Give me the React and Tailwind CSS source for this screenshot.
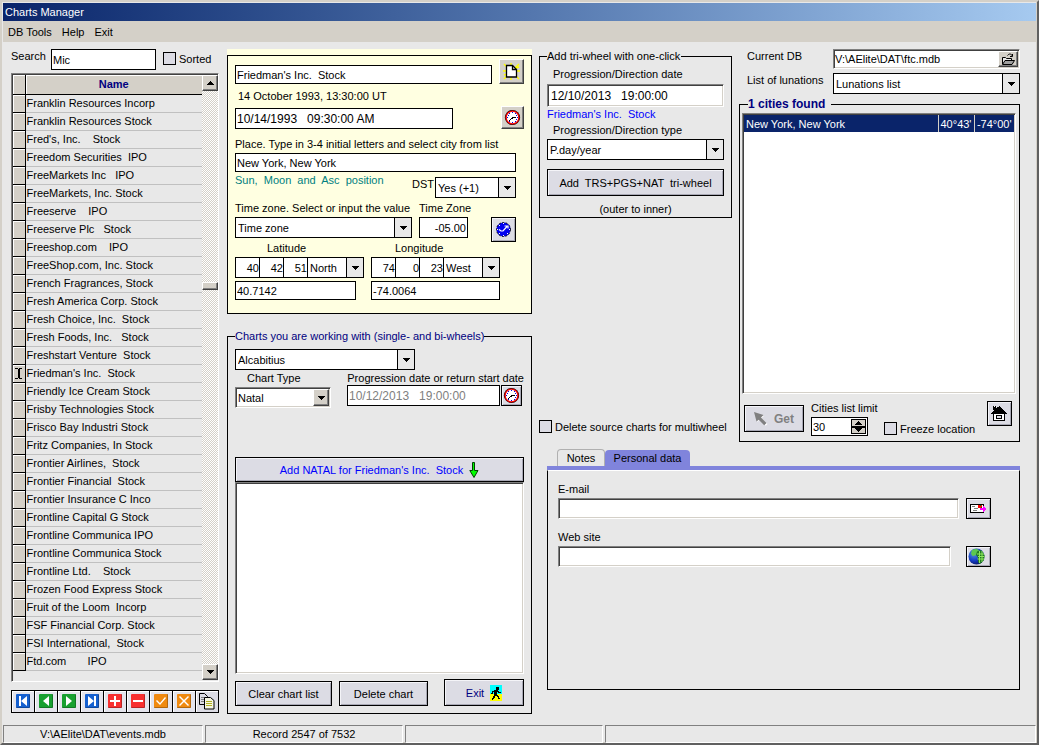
import { useState } from "react";
import clsx from "clsx";

const RECORDS = [
  "Franklin Resources Incorp",
  "Franklin Resources Stock",
  "Fred's, Inc.    Stock",
  "Freedom Securities  IPO",
  "FreeMarkets Inc   IPO",
  "FreeMarkets, Inc. Stock",
  "Freeserve    IPO",
  "Freeserve Plc   Stock",
  "Freeshop.com    IPO",
  "FreeShop.com, Inc. Stock",
  "French Fragrances, Stock",
  "Fresh America Corp. Stock",
  "Fresh Choice, Inc.  Stock",
  "Fresh Foods, Inc.   Stock",
  "Freshstart Venture  Stock",
  "Friedman's Inc.  Stock",
  "Friendly Ice Cream Stock",
  "Frisby Technologies Stock",
  "Frisco Bay Industri Stock",
  "Fritz Companies, In Stock",
  "Frontier Airlines,  Stock",
  "Frontier Financial  Stock",
  "Frontier Insurance C Inco",
  "Frontline Capital G Stock",
  "Frontline Communica IPO",
  "Frontline Communica Stock",
  "Frontline Ltd.    Stock",
  "Frozen Food Express Stock",
  "Fruit of the Loom  Incorp",
  "FSF Financial Corp. Stock",
  "FSI International,  Stock",
  "Ftd.com       IPO",
];

const RAISED =
  "bg-[#d4d0c8] border border-t-white border-l-white border-r-[#404040] border-b-[#404040] shadow-[inset_-1px_-1px_0_#808080]";
const FLAT_BTN =
  "flex items-center justify-center border border-black bg-[#dcdce4] shadow-[inset_1px_1px_0_#f4f4f8,inset_-1px_-1px_0_#a8a8b4]";
const SUNKEN =
  "bg-white border border-t-[#808080] border-l-[#808080] border-r-white border-b-white shadow-[inset_1px_1px_0_#404040,inset_-1px_-1px_0_#d4d0c8]";
const FIELD = "border border-black bg-white px-px outline-none";

const DownArrow = () => (
  <svg width="7" height="4" viewBox="0 0 7 4" shapeRendering="crispEdges" aria-hidden="true">
    <path d="M0 0h7v1H6v1H5v1H4v1H3V3H2V2H1V1H0z" fill="#000" />
  </svg>
);

const UpArrow = () => (
  <svg width="7" height="4" viewBox="0 0 7 4" shapeRendering="crispEdges" aria-hidden="true">
    <path d="M3 0h1v1h1v1h1v1h1v1H0V3h1V2h1V1h1z" fill="#000" />
  </svg>
);

const Combo = ({ label, id, options, className, sunken }) => (
  <div
    className={clsx(
      "relative h-[21px] shrink-0",
      sunken ? SUNKEN : "border border-black bg-white",
      className,
    )}
  >
    <select
      id={id}
      aria-label={label}
      className="block h-full w-full appearance-none bg-transparent pl-0.5 pr-4 outline-none"
    >
      {options.map((o) => (
        <option key={o}>{o}</option>
      ))}
    </select>
    <span
      className={clsx(
        "pointer-events-none absolute flex items-center justify-center",
        sunken
          ? "top-px right-px bottom-px w-4 " + RAISED
          : "inset-y-0 right-0 w-[17px] border-l border-black bg-[#e8e8e8]",
      )}
    >
      <DownArrow />
    </span>
  </div>
);

const CheckBox = ({ label, className }) => (
  <label className={clsx("flex items-center gap-[3px] whitespace-nowrap", className)}>
    <input
      type="checkbox"
      className="size-[13px] appearance-none border border-black bg-[#dcdce4] checked:bg-[#0a246a]"
    />
    {label}
  </label>
);

const ClockIcon = () => (
  <svg width="17" height="17" viewBox="0 0 17 17" aria-hidden="true">
    <circle cx="8.5" cy="8.5" r="7.600" fill="#000" />
    <circle cx="8.5" cy="8.5" r="7.100" fill="#f00000" />
    <circle cx="8.5" cy="8.5" r="5.700" fill="#fff" />
    <g fill="#0000e0" shapeRendering="crispEdges">
      <path d="M8 3h1v1H8zM8 13h1v1H8zM3 8h1v1H3zM13 8h1v1h-1zM5 4h1v1H5zM11 4h1v1h-1zM5 12h1v1H5zM11 12h1v1h-1zM4 6h1v1H4zM12 6h1v1h-1zM12 10h1v1h-1z" />
    </g>
    <path d="M5 11h1v-1h1V9h1V8h4v1H9v1H7v1H6v1H5z" fill="#000" shapeRendering="crispEdges" />
  </svg>
);

const NewPageIcon = () => (
  <svg width="17" height="17" viewBox="0 0 17 17" aria-hidden="true">
    <path
      d="M1 1l4 4M8 0v3M16 1l-4 4M0 8h4M13 8h4M1 16l4-4M8 13v4M16 16l-4-4M13 5l3-1M1 12l3-1"
      stroke="#ff0"
      strokeWidth="1.4"
    />
    <path d="M3.500 2.500h6l4 4v7.500h-10z" fill="#fff" stroke="#000" strokeWidth="1.300" />
    <path d="M9.500 2.500v4h4" fill="none" stroke="#000" strokeWidth="1.300" />
  </svg>
);

const ZoneIcon = () => (
  <svg width="15" height="15" viewBox="0 0 15 15" aria-hidden="true">
    <circle cx="7.500" cy="7.500" r="7" fill="#0000f0" stroke="#000" strokeDasharray="2 1.500" />
    <g fill="#fff" shapeRendering="crispEdges">
      <path d="M7 1h1v1H7zM7 13h1v1H7zM1 7h1v1H1zM13 7h1v1h-1zM3 3h1v1H3zM11 11h1v1h-1zM3 11h1v1H3z" />
    </g>
    <path d="M3 7.500l2 1.500h2l4-4.500M8.500 4H12V6.500" fill="none" stroke="#fff" strokeWidth="1.200" />
  </svg>
);

const FolderIcon = () => (
  <svg width="14" height="13" viewBox="0 0 14 13" aria-hidden="true">
    <path d="M1.500 11V4.500h3l1 1h5V8" fill="#e8e8e8" stroke="#000" />
    <path d="M1.500 11.500 4 7.500h9.500L11 11.500z" fill="#a0a0a0" stroke="#000" />
    <path d="M6.500 2.500C8 .5 10 .5 11.500 3M11.500 1v2.500H9" fill="none" stroke="#000" />
  </svg>
);

const HouseIcon = () => (
  <svg width="18" height="17" viewBox="0 0 18 17" shapeRendering="crispEdges" aria-hidden="true">
    <path d="M2 1h3v4H2zM8 1h1v1h1v1h1v1h1v1h1v1h1v1h1v1h1v1H0V8h1V7h1V6h1V5h1V4h1V3h1V2h2z" fill="#000" />
    <path d="M2 9h12v7H2z" fill="#000" />
    <path d="M3 9h10v6H3z" fill="#fff" />
    <path d="M5 10h6v4H5z" fill="#000" />
    <path d="M6 11h4v2H6z" fill="#dcdce4" />
    <path d="M3 1h1v1H3z" fill="#fff" />
  </svg>
);

const MailIcon = () => (
  <svg width="17" height="11" viewBox="0 0 17 11" shapeRendering="crispEdges" aria-hidden="true">
    <path d="M0 1h14v9H0z" fill="#000" />
    <path d="M1 2h12v7H1z" fill="#fff" />
    <path d="M2 3h3v1H2zM4 5h4v1H4zM3 7h4v1H3z" fill="#808080" />
    <path d="M8 2h4v3H8z" fill="#f00" />
    <path d="M10 2h1v1h-1zM11 4h1v1h-1z" fill="#008000" />
    <path d="M10 5h3V3h1v1h1v1h1v2h-1v1h-1v1h-1V7h-3z" fill="#f0f" />
  </svg>
);

const GlobeIcon = () => (
  <svg width="17" height="17" viewBox="0 0 17 17" aria-hidden="true">
    <defs>
      <radialGradient id="sea" cx="0.35" cy="0.3" r="0.8">
        <stop offset="0" stopColor="#5a9be0" />
        <stop offset="0.6" stopColor="#1238c0" />
        <stop offset="1" stopColor="#061050" />
      </radialGradient>
    </defs>
    <circle cx="8.5" cy="8.5" r="8" fill="url(#sea)" />
    <path d="M4 2 8 .8l3 1.200-1 3-3 2.500L4.500 8 3 5.500z" fill="#5cc850" />
    <path d="M9 3.500 13 2l3.500 5-.5 5-4 4-2-2V9.500L8 7z" fill="#1f7a20" />
    <path d="M9 6h7M10 8.500h6.500M9.500 11H16M11.500 3v12M14 3v11" stroke="#90e860" fill="none" />
  </svg>
);

const RunnerIcon = () => (
  <svg width="12" height="16" viewBox="0 0 12 16" shapeRendering="crispEdges" aria-hidden="true">
    <path d="M0 0h12v9H0z" fill="#0ff" />
    <path d="M0 9h12v7H0z" fill="#ff0" />
    <path
      d="M6 2h3v3H6zM4 5h4v1h1v1h2v1H8V7H7v3h1v1h1v2h1v1H8v-2H7v-1H5v2H4v1H3v1H2v-2h1v-2h1V7H3v2H1V8h1V6h2z"
      fill="#000"
    />
  </svg>
);

const GreenArrow = () => (
  <svg width="10" height="16" viewBox="0 0 10 16" aria-hidden="true">
    <path d="M3.500.5h2v8h3.500L5 15.500 .8 8.500h2.700z" fill="#0f0" stroke="#004000" />
  </svg>
);

const CursorIcon = () => (
  <svg width="14" height="14" viewBox="0 0 14 14" aria-hidden="true">
    <path d="M1 1l9 3-2.500 2 6 6-1.800 1.800-6-6L3.500 10z" fill="#fff" />
    <path d="M0 0l9.500 3-2.500 2.500 5.500 5.500-2.300 2.300-5.500-5.500L2.500 9.500z" fill="#808080" />
  </svg>
);

// Record navigator buttons: tile colour plus the white glyph on it
const NAV = [
  { name: "First", color: "#1560d0", d: "M3 2h2v10H3zM11 2v10L5 7z" },
  { name: "Previous", color: "#18a030", d: "M10 2v10L4 7z" },
  { name: "Next", color: "#18a030", d: "M4 2v10l6-5z" },
  { name: "Last", color: "#1560d0", d: "M3 2v10l6-5zM9 2h2v10H9z" },
  { name: "Insert", color: "#f83030", d: "M6 2h2v4h4v2H8v4H6V8H2V6h4z" },
  { name: "Delete", color: "#f83030", d: "M2 6h10v2H2z" },
  { name: "Post", color: "#f08a10", d: "M2 7l1-1 3 3 5-6 1 1-6 7z" },
  { name: "Cancel", color: "#f08a10", d: "M3 2l4 4 4-4 1 1-4 4 4 4-1 1-4-4-4 4-1-1 4-4-4-4z" },
];

const Navigator = () => (
  <div className="mt-2 flex border border-black">
    {NAV.map((n) => (
      <button
        key={n.name}
        aria-label={n.name}
        className="flex h-[21px] flex-1 items-center justify-center border-r border-black bg-[#e4e4ec] shadow-[inset_1px_1px_0_#fff]"
      >
        <svg width="14" height="14" viewBox="0 0 14 14" aria-hidden="true">
          <rect width="14" height="14" rx="1" fill={n.color} />
          <path d="M0 13h14v1H0zM13 0h1v14h-1z" fill="#000" opacity=".25" />
          <path d={n.d} fill="#fff" />
        </svg>
      </button>
    ))}
    <button
      aria-label="Copy record"
      className="flex h-[21px] flex-1 items-center justify-center bg-[#dcdce4] shadow-[inset_1px_1px_0_#fff]"
    >
      <svg width="16" height="17" viewBox="0 0 16 17" aria-hidden="true">
        <path d="M.5.5h5l3 3v8h-8z" fill="#dcdce4" stroke="#000" />
        <path d="M2 4.500h4M2 6.500h4M2 8.500h4" stroke="#808080" />
        <path d="M5.500 4.500h6l3.500 3v8.500H5.500z" fill="#f4f4e0" stroke="#000" />
        <path d="M7 8.500h6M7 10.500h6M7 12.500h6" stroke="#b0b020" />
      </svg>
    </button>
  </div>
);

const ChartList = () => {
  const [selected, setSelected] = useState("Friedman's Inc.  Stock");

  return (
    <div className="flex w-52 shrink-0 flex-col">
      <div className="flex items-start">
        <label htmlFor="search" className="w-10 pt-px">
          Search
        </label>
        <input id="search" defaultValue="Mic" className={clsx(FIELD, "h-[21px] w-[105px]")} />
        <CheckBox label="Sorted" className="ml-[7px] mt-[3px]" />
      </div>

      <div className="mt-[3px] flex border border-t-[#808080] border-l-[#808080] border-r-white border-b-white py-px pl-px shadow-[inset_1px_1px_0_#404040]">
        <div className="flex-1 pb-[9px]">
          <table className="w-full border-collapse">
            <thead>
              <tr className="h-[19px] border-b border-black bg-[#d4d0c8]">
                <td className="w-3 border-r border-black shadow-[inset_1px_1px_0_#fff]"></td>
                <th className="font-bold text-[#000080] shadow-[inset_1px_1px_0_#fff]">Name</th>
              </tr>
            </thead>
            <tbody>
              {RECORDS.map((r) => (
                <tr key={r} className="h-[18px]" onClick={() => setSelected(r)}>
                  <td className="border-r border-b border-black bg-[#d4d0c8] shadow-[inset_1px_1px_0_#fff]">
                    {r === selected && (
                      <svg width="7" height="11" viewBox="0 0 7 11" className="mx-auto" shapeRendering="crispEdges">
                        <path d="M0 0h3v1h1V0h3v1H4v9h3v1H4v-1H3v1H0v-1h3V1H0z" fill="#000" />
                        <path d="M3 1h2v9H3z" fill="#000" />
                      </svg>
                    )}
                  </td>
                  <td className="border-b border-[#c0c0c0] pl-px whitespace-pre">{r}</td>
                </tr>
              ))}
            </tbody>
          </table>
        </div>
        <div className="flex w-4 flex-col bg-[repeating-conic-gradient(#ffffff_0_25%,#d4d0c8_0_50%)] bg-[length:2px_2px]">
          <button aria-label="Scroll up" className={clsx(RAISED, "flex h-4 items-center justify-center")}>
            <UpArrow />
          </button>
          <div className="flex-[191]"></div>
          <div className={clsx(RAISED, "h-2")}></div>
          <div className="flex-[374]"></div>
          <button aria-label="Scroll down" className={clsx(RAISED, "flex h-4 items-center justify-center")}>
            <DownArrow />
          </button>
        </div>
      </div>

      <Navigator />
    </div>
  );
};

const Coordinate = ({ name, values, dirs, className }) => (
  <div className={clsx("flex", className)}>
    {values.map((v, i) => (
      <input
        key={i}
        aria-label={name + " " + ["degrees", "minutes", "seconds"][i]}
        defaultValue={v}
        className="h-[21px] w-6 border border-r-0 border-black bg-white text-right outline-none"
      />
    ))}
    <Combo label={name + " direction"} options={dirs} className="flex-1" />
  </div>
);

const EventForm = () => (
  <div className="bg-[#ffffe1] pt-1.5">
    <div className="flex flex-col border border-black px-[7px] pt-[3px] pb-[13px]">
      <div className="flex items-end justify-between">
        <input aria-label="Event name" defaultValue="Friedman's Inc.  Stock" className={clsx(FIELD, "h-[19px] w-[257px]")} />
        <button aria-label="New event" className={clsx(RAISED, "flex size-[25px] items-center justify-center")}>
          <NewPageIcon />
        </button>
      </div>
      <p className="mt-1.5 pl-[3px]">14 October 1993, 13:30:00 UT</p>
      <div className="mt-1 flex items-end justify-between">
        <input
          aria-label="Event date"
          defaultValue="10/14/1993   09:30:00 AM"
          className={clsx(FIELD, "h-[21px] w-[218px] text-[12px]")}
        />
        <button aria-label="Set current time" className={clsx(RAISED, "flex size-[23px] items-center justify-center")}>
          <ClockIcon />
        </button>
      </div>
      <label htmlFor="place" className="mt-[9px] whitespace-nowrap">
        Place. Type in 3-4 initial letters and select city from list
      </label>
      <input id="place" defaultValue="New York, New York" className={clsx(FIELD, "mt-[3px] h-[19px] w-[281px]")} />
      <div className="mt-0.5 flex w-[281px] items-start">
        <span className="flex-1 whitespace-pre text-[#008080]">Sun,  Moon  and  Asc  position</span>
        <label htmlFor="dst" className="mt-1 mr-px">
          DST
        </label>
        <Combo id="dst" options={["Yes (+1)", "No"]} className="mt-[3px] w-[81px]" />
      </div>
      <div className="mt-1 flex">
        <label htmlFor="zone" className="w-[184px] whitespace-nowrap">
          Time zone. Select or input the value
        </label>
        <label htmlFor="offset">Time Zone</label>
      </div>
      <div className="mt-[3px] flex w-[281px] items-start">
        <Combo id="zone" options={["Time zone"]} className="w-[177px]" />
        <input id="offset" defaultValue="-05.00" className={clsx(FIELD, "ml-[7px] h-[21px] w-[49px] text-right")} />
        <button aria-label="Find time zone" className={clsx(FLAT_BTN, "ml-auto size-[25px]")}>
          <ZoneIcon />
        </button>
      </div>
      <div className="flex">
        <span className="w-[136px] pl-8">Latitude</span>
        <span className="pl-6">Longitude</span>
      </div>
      <div className="mt-[3px] flex gap-[7px]">
        <Coordinate name="Latitude" values={[40, 42, 51]} dirs={["North", "South"]} className="w-[129px]" />
        <Coordinate name="Longitude" values={[74, 0, 23]} dirs={["West", "East"]} className="w-[129px]" />
      </div>
      <div className="mt-[3px] flex gap-[7px]">
        <div className="w-[129px]">
          <input aria-label="Decimal latitude" defaultValue="40.7142" className={clsx(FIELD, "block h-[19px] w-[121px]")} />
        </div>
        <input aria-label="Decimal longitude" defaultValue="-74.0064" className={clsx(FIELD, "h-[19px] w-[129px]")} />
      </div>
    </div>
  </div>
);

const WorkingCharts = () => (
  <fieldset className="mt-4 border border-black px-[7px] pb-[7px]">
    <legend className="text-[#000080]">Charts you are working with (single- and bi-wheels)</legend>
    <Combo label="House system" options={["Alcabitius", "Placidus"]} className="mt-[7px] w-[180px]" />
    <div className="mt-0.5 flex justify-between">
      <label htmlFor="chart-type" className="pl-3">
        Chart Type
      </label>
      <label htmlFor="prog-date" className="whitespace-nowrap">
        Progression date or return start date
      </label>
    </div>
    <div className="mt-px flex items-start">
      <Combo id="chart-type" options={["Natal", "Transits"]} sunken className="mt-0.5 w-24" />
      <input
        id="prog-date"
        defaultValue="10/12/2013   19:00:00"
        disabled
        className={clsx(FIELD, "ml-4 h-[21px] w-[153px] text-[12px] text-[#808080]")}
      />
      <button aria-label="Set start time" className={clsx(FLAT_BTN, "ml-px size-[21px]")}>
        <ClockIcon />
      </button>
    </div>
    <button className={clsx(FLAT_BTN, "mt-[49px] h-[25px] w-full gap-1.5 whitespace-pre text-[#0000ff]")}>
      Add NATAL for Friedman's Inc.  Stock
      <GreenArrow />
    </button>
    <div className={clsx(SUNKEN, "h-48")}></div>
    <div className="mt-[5px] flex items-end gap-[7px]">
      <button className={clsx(FLAT_BTN, "h-[25px] w-[97px]")}>Clear chart list</button>
      <button className={clsx(FLAT_BTN, "h-[25px] w-[89px]")}>Delete chart</button>
      <button className={clsx(FLAT_BTN, "ml-auto h-[27px] w-20 gap-1.5 text-[#000080]")}>
        Exit
        <RunnerIcon />
      </button>
    </div>
  </fieldset>
);

const TriWheel = () => (
  <fieldset className="flex flex-col border border-black px-[7px] pb-0.5">
    <legend className="pr-px">Add tri-wheel with one-click</legend>
    <label htmlFor="tri-date" className="mt-1.5 pl-1.5">
      Progression/Direction date
    </label>
    <input
      id="tri-date"
      defaultValue="12/10/2013   19:00:00"
      className={clsx(SUNKEN, "mt-1 h-[23px] px-[3px] text-[12px] outline-none")}
    />
    <p className="mt-px whitespace-pre text-[#0000ff]">Friedman's Inc.  Stock</p>
    <label htmlFor="tri-type" className="mt-1 pl-1.5">
      Progression/Direction type
    </label>
    <Combo id="tri-type" options={["P.day/year"]} className="mt-[3px]" />
    <button className={clsx(FLAT_BTN, "mt-[9px] h-[27px] whitespace-pre")}>Add  TRS+PGS+NAT  tri-wheel</button>
    <p className="mt-[7px] text-center">(outer to inner)</p>
  </fieldset>
);

const Cities = () => (
  <fieldset className="mt-1 border border-black pr-[3px] pb-[5px] pl-0.5">
    <legend className="ml-1.5 pr-1.5 text-[12px] font-bold text-[#000080]">1 cities found</legend>
    <div className={clsx(SUNKEN, "mt-[3px] h-[281px] p-px")}>
      <table className="w-full border-collapse bg-[#0a246a] text-white">
        <tbody>
          <tr className="h-[17px]">
            <td className="pl-0.5">New York, New York</td>
            <td className="w-9 border-l border-[#d4d0c8] text-center">40°43'</td>
            <td className="w-10 border-l border-[#d4d0c8] text-center whitespace-nowrap">-74°00'</td>
          </tr>
        </tbody>
      </table>
    </div>
    <div className="mt-[7px] flex items-start pr-1 pl-0.5">
      <button disabled className={clsx(FLAT_BTN, "mt-1 h-[27px] w-[60px] gap-1.5 text-[12px] font-bold text-[#808080]")}>
        <CursorIcon />
        Get
      </button>
      <div className="mt-px ml-[7px] w-[73px]">
        <label htmlFor="limit" className="block whitespace-nowrap">
          Cities list limit
        </label>
        <div className="mt-[3px] flex h-[19px] w-[57px] border border-black bg-white">
          <input id="limit" defaultValue="30" className="w-0 flex-1 bg-transparent pl-px outline-none" />
          <div className="m-px flex w-[15px] flex-col">
            <button aria-label="More" className="flex flex-1 items-center justify-center border border-black bg-[#d4d0c8]">
              <UpArrow />
            </button>
            <button aria-label="Less" className="flex flex-1 items-center justify-center border border-black bg-[#d4d0c8]">
              <DownArrow />
            </button>
          </div>
        </div>
      </div>
      <CheckBox label="Freeze location" className="mt-[21px]" />
      <button aria-label="Home location" className={clsx(FLAT_BTN, "ml-auto size-[25px]")}>
        <HouseIcon />
      </button>
    </div>
  </fieldset>
);

const PersonalData = () => (
  <div className="mt-[7px] ml-2">
    <div className="flex items-end pl-[10px]">
      <button className="h-[17px] w-12 rounded-t-sm border border-b-0 border-[#b0b0b0]">Notes</button>
      <button className="h-4 w-[85px] rounded-t-sm bg-[#8084dc]">Personal data</button>
    </div>
    <div className="h-1 bg-[#8084dc]"></div>
    <div className="flex min-h-[220px] flex-col border border-t-white border-r-black border-b-black border-l-black pt-3 pr-7 pl-[10px]">
      <label htmlFor="email">E-mail</label>
      <div className="mt-[3px] flex gap-[7px]">
        <input id="email" className={clsx(SUNKEN, "h-[21px] flex-1 px-1 outline-none")} />
        <button aria-label="Send e-mail" className={clsx(FLAT_BTN, "h-[21px] w-[25px]")}>
          <MailIcon />
        </button>
      </div>
      <label htmlFor="site" className="mt-3">
        Web site
      </label>
      <div className="mt-[3px] flex gap-[15px]">
        <input id="site" className={clsx(SUNKEN, "h-[21px] flex-1 px-1 outline-none")} />
        <button aria-label="Open web site" className={clsx(FLAT_BTN, "h-[21px] w-[25px] pr-1")}>
          <GlobeIcon />
        </button>
      </div>
    </div>
  </div>
);

const StatusBar = () => (
  <footer className="flex h-[18px] gap-0.5 text-center leading-4">
    {["V:\\AElite\\DAT\\events.mdb", "Record 2547 of 7532", "", ""].map((t, i) => (
      <div
        key={i}
        className={clsx(
          "border border-t-[#808080] border-l-[#808080] border-r-white border-b-white",
          i === 0 && "w-[200px]",
          (i === 1 || i === 2) && "w-[198px]",
          i === 3 && "flex-1",
        )}
      >
        {t}
      </div>
    ))}
  </footer>
);

const App = () => {
  return (
    <div className="flex min-h-screen flex-col border-2 border-t-[#d4d0c8] border-r-[#606060] border-b-[#606060] border-l-[#d4d0c8] bg-[#e8e8e8] pt-px pr-px pl-px font-['Liberation_Sans',Arial,sans-serif] text-[11px] leading-3 text-black shadow-[inset_-1px_-1px_0_#d4d0c8]">
      <h1 className="h-[18px] bg-linear-to-r from-[#0a246a] to-[#a6caf0] pl-0.5 leading-[18px] text-white">Charts Manager</h1>
      <nav className="flex h-[21px] items-center gap-2.5 bg-[#d4d0c8] pl-[5px]">
        <a href="#tools">DB Tools</a>
        <a href="#help">Help</a>
        <a href="#exit">Exit</a>
      </nav>

      <main className="flex flex-1 pt-[7px] pr-4 pb-[11px] pl-2">
        <ChartList />

        <div className="mr-[7px] ml-2 w-[305px] shrink-0">
          <EventForm />
          <WorkingCharts />
        </div>

        <div className="flex-1">
          <div className="flex gap-[7px]">
            <div className="flex w-[193px] shrink-0 flex-col justify-between pt-px pb-[9px]">
              <TriWheel />
              <CheckBox label="Delete source charts for multiwheel" />
            </div>
            <div className="flex-1">
              <div className="flex items-start pl-2">
                <label htmlFor="db" className="w-[86px] pt-px">
                  Current DB
                </label>
                <div className={clsx(SUNKEN, "flex h-5 flex-1 p-px")}>
                  <input id="db" defaultValue="V:\AElite\DAT\ftc.mdb" className="w-0 flex-1 bg-transparent outline-none" />
                  <button aria-label="Browse" className={clsx(RAISED, "flex w-5 items-center justify-center")}>
                    <FolderIcon />
                  </button>
                </div>
              </div>
              <div className="mt-1 flex items-start pl-2">
                <label htmlFor="lunations" className="w-[86px] pt-px">
                  List of lunations
                </label>
                <Combo id="lunations" options={["Lunations list"]} className="flex-1" />
              </div>
              <Cities />
            </div>
          </div>
          <PersonalData />
        </div>
      </main>

      <StatusBar />
    </div>
  );
};

export default App;
